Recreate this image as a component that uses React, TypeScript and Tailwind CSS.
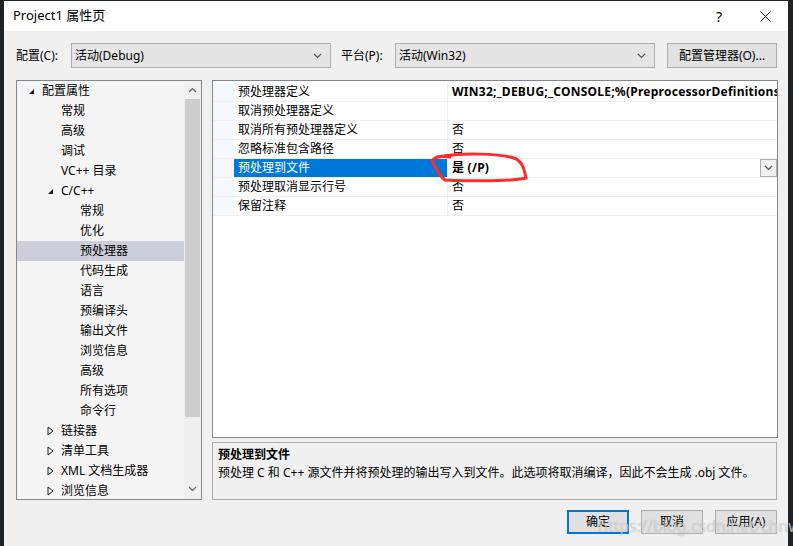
import React from 'react'

// tree rows: level, label, expander ('open' | 'closed' | null)
const treeRows: { lvl: number; label: string; exp?: 'open' | 'closed'; sel?: boolean }[] = [
  { lvl: 0, label: '配置属性', exp: 'open' },
  { lvl: 1, label: '常规' },
  { lvl: 1, label: '高级' },
  { lvl: 1, label: '调试' },
  { lvl: 1, label: 'VC++ 目录' },
  { lvl: 1, label: 'C/C++', exp: 'open' },
  { lvl: 2, label: '常规' },
  { lvl: 2, label: '优化' },
  { lvl: 2, label: '预处理器', sel: true },
  { lvl: 2, label: '代码生成' },
  { lvl: 2, label: '语言' },
  { lvl: 2, label: '预编译头' },
  { lvl: 2, label: '输出文件' },
  { lvl: 2, label: '浏览信息' },
  { lvl: 2, label: '高级' },
  { lvl: 2, label: '所有选项' },
  { lvl: 2, label: '命令行' },
  { lvl: 1, label: '链接器', exp: 'closed' },
  { lvl: 1, label: '清单工具', exp: 'closed' },
  { lvl: 1, label: 'XML 文档生成器', exp: 'closed' },
  { lvl: 1, label: '浏览信息', exp: 'closed' },
]

const props: { name: string; value: string; bold?: boolean; sel?: boolean }[] = [
  { name: '预处理器定义', value: 'WIN32;_DEBUG;_CONSOLE;%(PreprocessorDefinitions)', bold: true },
  { name: '取消预处理器定义', value: '' },
  { name: '取消所有预处理器定义', value: '否' },
  { name: '忽略标准包含路径', value: '否' },
  { name: '预处理到文件', value: '是 (/P)', bold: true, sel: true },
  { name: '预处理取消显示行号', value: '否' },
  { name: '保留注释', value: '否' },
]

function Chevron({ up = false, className = '' }: { up?: boolean; className?: string }) {
  return (
    <svg width="9" height="6" viewBox="0 0 9 6" className={className}>
      <path d={up ? 'M1 5 L4.5 1.5 L8 5' : 'M1 1 L4.5 4.5 L8 1'} fill="none" stroke="currentColor" strokeWidth="1.2" />
    </svg>
  )
}

function Expander({ kind }: { kind: 'open' | 'closed' }) {
  if (kind === 'open') {
    return (
      <svg width="7" height="7" viewBox="0 0 7 7">
        <path d="M6 1 L6 6 L1 6 Z" fill="#1e1e1e" />
      </svg>
    )
  }
  return (
    <svg width="7" height="10" viewBox="0 0 7 10">
      <path d="M1 1 L6 5 L1 9 Z" fill="none" stroke="#1e1e1e" strokeWidth="1" />
    </svg>
  )
}

function Combo({ text }: { text: string }) {
  return (
    <div className="w-[260px] h-[25px] bg-[#e5e5e5] border border-[#adadad] flex items-center pl-[3px] pr-[8px]">
      <span className="flex-1">{text}</span>
      <Chevron className="text-[#555]" />
    </div>
  )
}

function Button({ label, primary = false }: { label: string; primary?: boolean }) {
  return (
    <div
      className={
        primary
          ? 'w-[62px] h-[24px] bg-[#e1e1e1] border-2 border-[#0078d7] flex items-center justify-center'
          : 'w-[62px] h-[24px] bg-[#e1e1e1] border border-[#adadad] flex items-center justify-center'
      }
    >
      {label}
    </div>
  )
}

export default function App() {
  return (
    <div className="w-[793px] h-[546px] bg-[#1e2224] pl-[4px] pt-[1px] overflow-hidden text-[12px] text-black font-['Noto_Sans','Noto_Sans_CJK_SC',sans-serif]">
      <div className="relative w-[784px] h-[545px] bg-[#f0f0f0] flex flex-col">
        {/* title bar */}
        <div className="h-[30px] bg-white flex items-center pl-[9px] shrink-0">
          <span className="flex-1 text-[13px]">Project1 属性页</span>
          <span className="w-[46px] text-center text-[14px]">?</span>
          <span className="w-[46px] flex justify-center">
            <svg width="11" height="11" viewBox="0 0 11 11">
              <path d="M0.5 0.5 L10.5 10.5 M10.5 0.5 L0.5 10.5" stroke="#111" strokeWidth="1" />
            </svg>
          </span>
        </div>

        {/* config row */}
        <div className="flex items-center pl-[12px] mt-[12px] h-[25px]">
          <span className="w-[55px]">配置(C):</span>
          <Combo text="活动(Debug)" />
          <span className="w-[54px] ml-[10px]">平台(P):</span>
          <Combo text="活动(Win32)" />
          <div className="ml-[12px] w-[110px] h-[25px] bg-[#e1e1e1] border border-[#adadad] flex items-center justify-center">
            配置管理器(O)...
          </div>
        </div>

        {/* main */}
        <div className="flex mt-[12px] pl-[12px] h-[420px]">
          {/* tree */}
          <div className="w-[186px] h-[420px] border border-[#828790] bg-[#f5f5f5] flex overflow-hidden">
            <div className="flex-1 flex flex-col">
              {treeRows.map((r, i) => (
                <div key={i} className={r.sel ? 'h-[20px] shrink-0 flex items-center bg-[#cccedb]' : 'h-[20px] shrink-0 flex items-center'}>
                  <span className={r.lvl === 0 ? 'w-[25px] pl-[11px]' : r.lvl === 1 ? 'w-[44px] pl-[30px]' : 'w-[63px]'}>
                    {r.exp && <Expander kind={r.exp} />}
                  </span>
                  <span className="leading-[20px]">{r.label}</span>
                </div>
              ))}
            </div>
            <div className="w-[17px] bg-[#f0f0f0] flex flex-col items-center">
              <div className="h-[18px] flex items-center text-[#606060]">
                <Chevron up />
              </div>
              <div className="w-[15px] h-[318px] bg-[#cdcdcd]" />
              <div className="flex-1" />
              <div className="h-[20px] flex items-center text-[#606060]">
                <Chevron />
              </div>
            </div>
          </div>

          {/* right side */}
          <div className="ml-[10px] w-[566px] flex flex-col">
            <div className="h-[358px] border border-[#828790] bg-white pt-[2px] overflow-hidden">
              {props.map((p, i) => (
                <div key={i} className="h-[19px] flex border-b border-[#f0f0f0]">
                  <div className="w-[21px] bg-[#f5f8fc]" />
                  <div
                    className={
                      p.sel
                        ? 'w-[214px] bg-[#0078d7] text-white pl-[4px] leading-[18px] border-r border-[#f0f0f0]'
                        : 'w-[214px] pl-[4px] leading-[18px] border-r border-[#f0f0f0]'
                    }
                  >
                    {p.name}
                  </div>
                  <div className="flex-1 flex items-center overflow-hidden">
                    <span
                      className={
                        p.bold
                          ? 'flex-1 pl-[4px] font-bold tracking-[0.25px] whitespace-nowrap leading-[18px]'
                          : 'flex-1 pl-[4px] whitespace-nowrap leading-[18px]'
                      }
                    >
                      {p.value}
                    </span>
                    {p.sel && (
                      <div className="w-[17px] h-[18px] bg-[#f0f0f0] border border-[#adadad] flex items-center justify-center text-[#555] shrink-0">
                        <Chevron />
                      </div>
                    )}
                  </div>
                </div>
              ))}
            </div>
            <div className="mt-[4px] h-[58px] w-[565px] border border-[#adadad] px-[5px] pt-[3px]">
              <div className="font-bold leading-[18px]">预处理到文件</div>
              <div className="leading-[18px]">预处理 C 和 C++ 源文件并将预处理的输出写入到文件。此选项将取消编译，因此不会生成 .obj 文件。</div>
            </div>
          </div>
        </div>

        {/* buttons */}
        <div className="flex justify-end gap-[12px] mt-[10px] pr-[11px]">
          <Button label="确定" primary />
          <Button label="取消" />
          <Button label="应用(A)" />
        </div>

        {/* red hand-drawn annotation */}
        <svg className="absolute left-0 top-0 pointer-events-none" width="784" height="545" viewBox="4 1 784 545">
          <path
            d="M437 157 C465 152 500 154 514 158 C522 161 524 168 526 178 C508 182 470 181 445 180 C440 177 436 169 432 161 C434 157 441 156 450 157"
            fill="none"
            stroke="#ff2b2b"
            strokeWidth="3"
            strokeLinecap="round"
          />
        </svg>

        {/* watermark */}
        <span className="absolute left-[594px] top-[513px] text-[16px] text-white/50 whitespace-nowrap pointer-events-none [text-shadow:0_0_1px_rgba(120,120,120,0.6)]">
          https://blog.csdn.net/chnwl
        </span>
      </div>
    </div>
  )
}
